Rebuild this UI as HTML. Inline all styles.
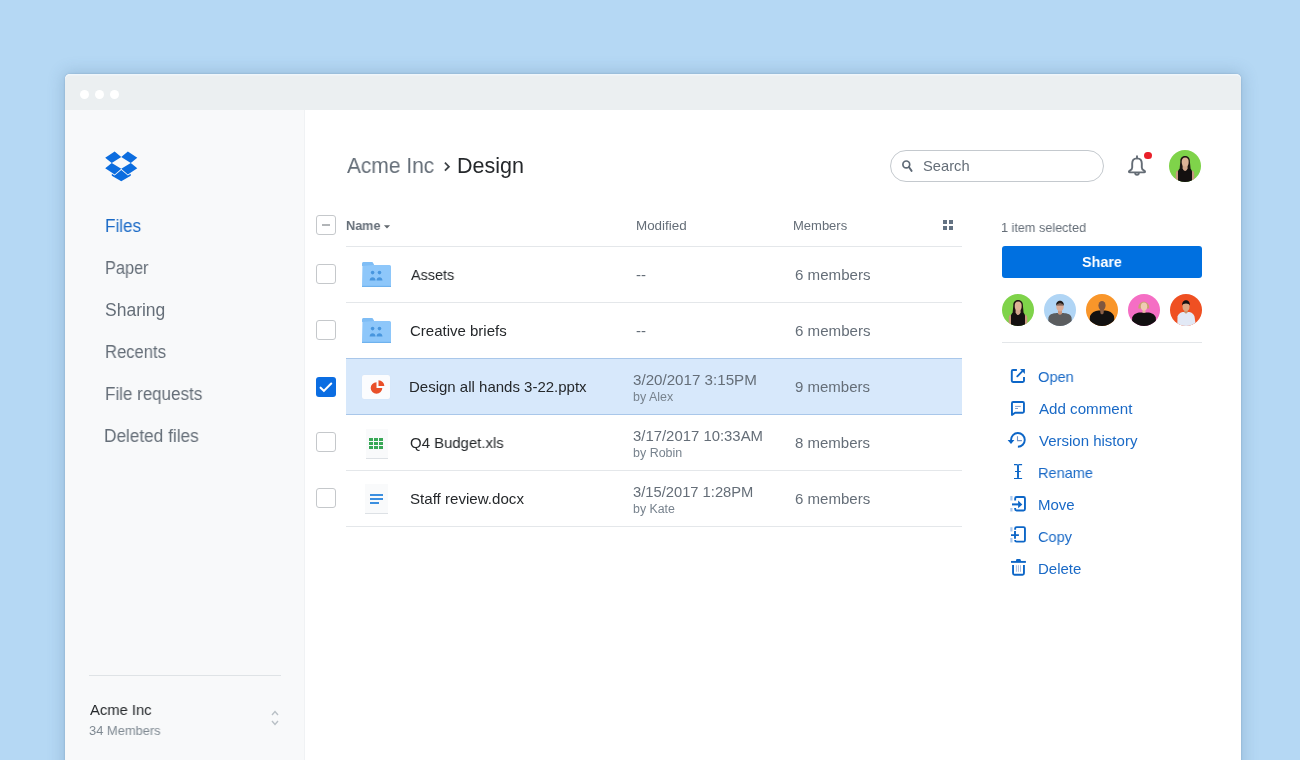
<!DOCTYPE html>
<html><head><meta charset="utf-8">
<style>
html,body{margin:0;padding:0;}
body{width:1300px;height:760px;overflow:hidden;background:#b5d8f4;position:relative;font-family:"Liberation Sans",sans-serif;}
.t{position:absolute;white-space:pre;will-change:transform;}
.abs{position:absolute;}
#win{position:absolute;left:65px;top:74px;width:1176px;height:720px;background:#fff;border-radius:5px 5px 0 0;box-shadow:0 0 1.5px rgba(40,70,100,0.35), 0 0 16px 2px rgba(50,90,130,0.22);overflow:hidden;}
#title{position:absolute;left:65px;top:74px;width:1176px;height:36px;background:#ebeff1;border-radius:5px 5px 0 0;box-shadow:inset 0 1.5px 0 rgba(240,246,252,0.9);}
.dot{position:absolute;width:9px;height:9px;border-radius:50%;background:#fff;top:89.5px;}
#side{position:absolute;left:65px;top:110px;width:239px;height:650px;background:#f8f9fa;border-right:1px solid #f0f2f4;}
.cb{position:absolute;left:316px;width:18px;height:18px;border:1px solid #c5c8cb;border-radius:3px;background:#fff;}
.hl{position:absolute;left:346px;width:616px;height:1px;background:#e4e7ea;}
.av{position:absolute;width:32px;height:32px;}
</style></head><body>
<div id="win"></div>
<div id="title"></div>
<div class="dot" style="left:80px"></div>
<div class="dot" style="left:95px"></div>
<div class="dot" style="left:110px"></div>
<div id="side"></div>
<svg class="abs" style="left:102.1px;top:147.2px" width="38.5" height="39" viewBox="0 0 24 24" preserveAspectRatio="none"><path fill="#0c6ddf" d="M12 6.134L6.069 9.797 2 6.54l5.883-3.843L12 6.134zm-10 6.92l5.883 3.843L12 13.459 6.069 9.797 2 13.054zm10 .405l4.116 3.439L22 13.054l-4.069-3.257L12 13.459zM22 6.54l-5.884-3.843L12 6.134l5.931 3.663L22 6.54zm-9.989 7.6l-4.129 3.43-1.767-1.154v1.295L12.011 21l5.887-3.289v-1.295l-1.767 1.154-4.12-3.43z"/></svg>
<div class="t" style="left:104.50px;top:217.95px;font-size:17.5px;line-height:17.5px;color:#1969c6;font-weight:400;transform:scaleX(0.9748);transform-origin:0 0;">Files</div>
<div class="t" style="left:104.56px;top:259.95px;font-size:17.5px;line-height:17.5px;color:#656e78;font-weight:400;transform:scaleX(0.9316);transform-origin:0 0;">Paper</div>
<div class="t" style="left:105.11px;top:301.95px;font-size:17.5px;line-height:17.5px;color:#656e78;font-weight:400;">Sharing</div>
<div class="t" style="left:104.54px;top:343.95px;font-size:17.5px;line-height:17.5px;color:#656e78;font-weight:400;transform:scaleX(0.9497);transform-origin:0 0;">Recents</div>
<div class="t" style="left:104.51px;top:385.95px;font-size:17.5px;line-height:17.5px;color:#656e78;font-weight:400;transform:scaleX(0.9712);transform-origin:0 0;">File requests</div>
<div class="t" style="left:104.49px;top:427.95px;font-size:17.5px;line-height:17.5px;color:#656e78;font-weight:400;transform:scaleX(0.9837);transform-origin:0 0;">Deleted files</div>
<div class="abs" style="left:89px;top:675px;width:192px;height:1px;background:#dfe3e6"></div>
<div class="t" style="left:89.77px;top:702.00px;font-size:15px;line-height:15px;color:#25282b;font-weight:400;transform:scaleX(0.9855);transform-origin:0 0;">Acme Inc</div>
<div class="t" style="left:89.31px;top:723.70px;font-size:13px;line-height:13px;color:#7f8992;font-weight:400;transform:scaleX(0.9903);transform-origin:0 0;">34 Members</div>
<svg class="abs" style="left:269px;top:707px" width="12" height="22" viewBox="0 0 12 22"><path d="M3 8 L6 4.5 L9 8 M3 14 L6 17.5 L9 14" fill="none" stroke="#b9c0c6" stroke-width="1.4"/></svg>
<div class="t" style="left:347.36px;top:156.25px;font-size:21.5px;line-height:21.5px;color:#656e78;font-weight:400;transform:scaleX(0.9729);transform-origin:0 0;">Acme Inc</div>
<svg class="abs" style="left:440px;top:158px" width="14" height="16" viewBox="440 158 14 16"><path d="M444.9 162.7 L448.9 166.7 L444.9 170.7" fill="none" stroke="#3e4347" stroke-width="1.8"/></svg>
<div class="t" style="left:456.75px;top:156.25px;font-size:21.5px;line-height:21.5px;color:#25282b;font-weight:400;transform:scaleX(0.9954);transform-origin:0 0;">Design</div>
<div class="abs" style="left:890px;top:150px;width:212px;height:30px;border:1px solid #c4c9ce;border-radius:16px;background:#fff"></div>
<svg class="abs" style="left:896px;top:154px" width="24" height="24" viewBox="896 154 24 24"><circle cx="906.3" cy="164.4" r="3.4" fill="none" stroke="#5f6a76" stroke-width="1.7"/><path d="M908.9 167 L911.6 170.9" stroke="#5f6a76" stroke-width="1.9" stroke-linecap="round"/></svg>
<div class="t" style="left:922.54px;top:158.75px;font-size:14.5px;line-height:14.5px;color:#656e78;font-weight:400;transform:scaleX(1.0145);transform-origin:0 0;">Search</div>
<svg class="abs" style="left:1120px;top:150px" width="32" height="32" viewBox="1120 150 32 32"><path d="M1137 156.3 V158.4" stroke="#646c75" stroke-width="1.9" stroke-linecap="round"/><path d="M1137 158.4 C1134 158.4 1132.2 160.6 1132.2 163.6 V167.4 C1132.2 168.9 1131.2 170 1129.8 170.7 C1128.4 171.4 1128.8 172.4 1130 172.4 H1144 C1145.2 172.4 1145.6 171.4 1144.2 170.7 C1142.8 170 1141.8 168.9 1141.8 167.4 V163.6 C1141.8 160.6 1140 158.4 1137 158.4 Z" fill="none" stroke="#646c75" stroke-width="1.9" stroke-linejoin="round"/><path d="M1135.1 172.8 C1135.1 175.4 1138.9 175.4 1138.9 172.8" fill="none" stroke="#646c75" stroke-width="1.8"/></svg>
<div class="abs" style="left:1144.2px;top:151.6px;width:7.6px;height:7.6px;border-radius:50%;background:#e9202a"></div>
<svg class="av" style="left:1169px;top:150px" viewBox="0 0 32 32"><defs><clipPath id="c1169_150"><circle cx="16" cy="16" r="16"/></clipPath></defs><g clip-path="url(#c1169_150)"><rect width="32" height="32" fill="#7fd34a"/><path d="M11.3 11.5 C10.8 4.2 21.4 4.2 20.9 11.5 L21.8 21 L10.4 21 Z" fill="#1e1512"/><path d="M6.6 34 L6.8 23.5 C7 21.2 8 20.8 9.2 20.8 L9.6 34 Z M22.4 34 L22.8 20.8 C24 20.8 25 21.2 25.2 23.5 L25.4 34 Z" fill="#c99880"/><path d="M9 34 L9 21.5 C9.3 19.5 10.5 18.8 12 18.6 L20 18.6 C21.5 18.8 22.7 19.5 23 21.5 L23 34 Z" fill="#141010"/><path d="M13.6 14.5 H18.6 V18.6 C18 20.2 17 21 16.1 21 C15.2 21 14.2 20.2 13.6 18.6 Z" fill="#d2a68c"/><ellipse cx="16.2" cy="11.9" rx="3.5" ry="4.5" fill="#ddb296"/></g></svg>
<div class="cb" style="top:215px"></div><div class="abs" style="left:322px;top:224px;width:8px;height:1.6px;background:#b2b5b8"></div>
<div class="t" style="left:345.96px;top:218.60px;font-size:13px;line-height:13px;color:#656e78;font-weight:700;transform:scaleX(0.9736);transform-origin:0 0;">Name</div>
<svg class="abs" style="left:383px;top:224px" width="8" height="6" viewBox="0 0 8 6"><path d="M0.9 1.2 L7.1 1.2 L4 4.6 Z" fill="#62686e"/></svg>
<div class="t" style="left:635.60px;top:218.60px;font-size:13px;line-height:13px;color:#656e78;font-weight:400;transform:scaleX(1.0309);transform-origin:0 0;">Modified</div>
<div class="t" style="left:792.64px;top:218.60px;font-size:13px;line-height:13px;color:#656e78;font-weight:400;transform:scaleX(0.9934);transform-origin:0 0;">Members</div>
<svg class="abs" style="left:943px;top:220px" width="10" height="10" viewBox="0 0 10 10"><rect x="0" y="0" width="4" height="4" fill="#637282"/><rect x="6" y="0" width="4" height="4" fill="#637282"/><rect x="0" y="6" width="4" height="4" fill="#637282"/><rect x="6" y="6" width="4" height="4" fill="#637282"/></svg>
<div class="abs" style="left:346px;top:358px;width:616px;height:57px;background:#d7e8fb;border-top:1px solid #a9c7ea;border-bottom:1px solid #a9c7ea;box-sizing:border-box"></div>
<div class="hl" style="top:246px"></div>
<div class="hl" style="top:302px"></div>
<div class="hl" style="top:470px"></div>
<div class="hl" style="top:526px"></div>
<div class="cb" style="top:264px"></div>
<svg class="abs" style="left:362px;top:262px" width="29" height="25" viewBox="0 0 29 25"><path d="M0.5 1.5 Q0.5 0 2 0 L9.5 0 Q10.5 0 11 1 L12 3 L27.5 3 Q29 3 29 4.5 L29 23.5 Q29 25 27.5 25 L1.5 25 Q0 25 0 23.5 Z" fill="#8ec7fa"/><path d="M0 4 L0 1.5 Q0 0 1.5 0 L9.5 0 Q10.5 0 11 1 L12 3 Z" fill="#7fbdf5"/><rect x="0" y="23.8" width="29" height="1.2" fill="#6fb2ee"/><circle cx="10.6" cy="10.6" r="1.8" fill="#4896de"/><circle cx="17.5" cy="10.6" r="1.8" fill="#4896de"/><path d="M7.6 18.6 C7.6 14 13.6 14 13.6 18.6 Z M14.5 18.6 C14.5 14 20.5 14 20.5 18.6 Z" fill="#4896de"/></svg>
<div class="t" style="left:410.67px;top:266.70px;font-size:15px;line-height:15px;color:#25282b;font-weight:400;transform:scaleX(0.9607);transform-origin:0 0;">Assets</div>
<div class="t" style="left:635.94px;top:266.50px;font-size:15px;line-height:15px;color:#656e78;font-weight:400;">--</div>
<div class="t" style="left:794.74px;top:266.60px;font-size:15px;line-height:15px;color:#656e78;font-weight:400;transform:scaleX(1.0076);transform-origin:0 0;">6 members</div>
<div class="cb" style="top:320px"></div>
<svg class="abs" style="left:362px;top:318px" width="29" height="25" viewBox="0 0 29 25"><path d="M0.5 1.5 Q0.5 0 2 0 L9.5 0 Q10.5 0 11 1 L12 3 L27.5 3 Q29 3 29 4.5 L29 23.5 Q29 25 27.5 25 L1.5 25 Q0 25 0 23.5 Z" fill="#8ec7fa"/><path d="M0 4 L0 1.5 Q0 0 1.5 0 L9.5 0 Q10.5 0 11 1 L12 3 Z" fill="#7fbdf5"/><rect x="0" y="23.8" width="29" height="1.2" fill="#6fb2ee"/><circle cx="10.6" cy="10.6" r="1.8" fill="#4896de"/><circle cx="17.5" cy="10.6" r="1.8" fill="#4896de"/><path d="M7.6 18.6 C7.6 14 13.6 14 13.6 18.6 Z M14.5 18.6 C14.5 14 20.5 14 20.5 18.6 Z" fill="#4896de"/></svg>
<div class="t" style="left:409.95px;top:322.70px;font-size:15px;line-height:15px;color:#25282b;font-weight:400;">Creative briefs</div>
<div class="t" style="left:635.94px;top:322.50px;font-size:15px;line-height:15px;color:#656e78;font-weight:400;">--</div>
<div class="t" style="left:794.74px;top:322.60px;font-size:15px;line-height:15px;color:#656e78;font-weight:400;transform:scaleX(1.0076);transform-origin:0 0;">6 members</div>
<div class="abs" style="left:316px;top:377px;width:20px;height:20px;border-radius:3px;background:#0b6de2"></div>
<svg class="abs" style="left:316px;top:377px" width="20" height="20" viewBox="0 0 20 20"><path d="M4.6 10.7 L7.9 13.9 L15.2 6.6" fill="none" stroke="#fff" stroke-width="2.1" stroke-linecap="round"/></svg>
<div class="abs" style="left:362px;top:375px;width:28px;height:24px;background:#fbfcfe;border-radius:2px;box-shadow:0 0 1px rgba(0,0,0,0.06)"></div>
<svg class="abs" style="left:362px;top:375px" width="28" height="24" viewBox="0 0 28 24"><path d="M14.5 13 L14.5 7.2 A5.8 5.8 0 1 0 20.3 13 Z" fill="#e9502a"/><path d="M16.5 11 L16.5 5.2 A5.8 5.8 0 0 1 22.3 11 Z" fill="#e9502a"/></svg>
<div class="t" style="left:409.47px;top:378.70px;font-size:15px;line-height:15px;color:#25282b;font-weight:400;">Design all hands 3-22.pptx</div>
<div class="t" style="left:632.82px;top:372.80px;font-size:14px;line-height:14px;color:#656e78;font-weight:400;transform:scaleX(1.0821);transform-origin:0 0;">3/20/2017 3:15PM</div>
<div class="t" style="left:632.60px;top:390.80px;font-size:12px;line-height:12px;color:#78838e;font-weight:400;transform:scaleX(1.0370);transform-origin:0 0;">by Alex</div>
<div class="t" style="left:794.81px;top:378.60px;font-size:15px;line-height:15px;color:#656e78;font-weight:400;">9 members</div>
<div class="cb" style="top:432px"></div>
<div class="abs" style="left:365.5px;top:428.5px;width:22.5px;height:30.5px;background:#f9fafb;border-bottom:1px solid #dde1e5;box-sizing:border-box"></div>
<svg class="abs" style="left:360px;top:422px" width="32" height="40" viewBox="360 422 32 40"><rect x="369" y="438" width="4" height="3" fill="#38a856"/><rect x="374" y="438" width="4" height="3" fill="#38a856"/><rect x="379" y="438" width="4" height="3" fill="#38a856"/><rect x="369" y="442" width="4" height="3" fill="#38a856"/><rect x="374" y="442" width="4" height="3" fill="#38a856"/><rect x="379" y="442" width="4" height="3" fill="#38a856"/><rect x="369" y="446" width="4" height="3" fill="#38a856"/><rect x="374" y="446" width="4" height="3" fill="#38a856"/><rect x="379" y="446" width="4" height="3" fill="#38a856"/></svg>
<div class="t" style="left:410.00px;top:434.70px;font-size:15px;line-height:15px;color:#25282b;font-weight:400;transform:scaleX(0.9939);transform-origin:0 0;">Q4 Budget.xls</div>
<div class="t" style="left:632.83px;top:428.80px;font-size:14px;line-height:14px;color:#656e78;font-weight:400;transform:scaleX(1.0637);transform-origin:0 0;">3/17/2017 10:33AM</div>
<div class="t" style="left:632.60px;top:446.80px;font-size:12px;line-height:12px;color:#78838e;font-weight:400;transform:scaleX(1.0387);transform-origin:0 0;">by Robin</div>
<div class="t" style="left:794.85px;top:434.60px;font-size:15px;line-height:15px;color:#656e78;font-weight:400;">8 members</div>
<div class="cb" style="top:488px"></div>
<div class="abs" style="left:365px;top:484px;width:23px;height:30px;background:#f9fafb;border-bottom:1px solid #dde1e5;box-sizing:border-box"></div>
<svg class="abs" style="left:365px;top:484px" width="23" height="30" viewBox="0 0 23 30"><rect x="5" y="10" width="13" height="2" fill="#3b8fe0"/><rect x="5" y="14" width="13" height="2" fill="#3b8fe0"/><rect x="5" y="18" width="9" height="2" fill="#3b8fe0"/></svg>
<div class="t" style="left:410.02px;top:490.70px;font-size:15px;line-height:15px;color:#25282b;font-weight:400;transform:scaleX(1.0072);transform-origin:0 0;">Staff review.docx</div>
<div class="t" style="left:632.84px;top:484.80px;font-size:14px;line-height:14px;color:#656e78;font-weight:400;transform:scaleX(1.0520);transform-origin:0 0;">3/15/2017 1:28PM</div>
<div class="t" style="left:632.61px;top:502.80px;font-size:12px;line-height:12px;color:#78838e;font-weight:400;transform:scaleX(1.0306);transform-origin:0 0;">by Kate</div>
<div class="t" style="left:794.75px;top:490.60px;font-size:15px;line-height:15px;color:#656e78;font-weight:400;transform:scaleX(1.0035);transform-origin:0 0;">6 members</div>
<div class="t" style="left:1001.44px;top:221.30px;font-size:13px;line-height:13px;color:#656e78;font-weight:400;transform:scaleX(0.9731);transform-origin:0 0;">1 item selected</div>
<div class="abs" style="left:1002px;top:246px;width:200px;height:32px;border-radius:3px;background:#0070e0"></div>
<div class="t" style="left:1081.90px;top:253.80px;font-size:15px;line-height:15px;color:#fff;font-weight:700;transform:scaleX(0.9569);transform-origin:0 0;">Share</div>
<svg class="av" style="left:1002px;top:294px" viewBox="0 0 32 32"><defs><clipPath id="c1002_294"><circle cx="16" cy="16" r="16"/></clipPath></defs><g clip-path="url(#c1002_294)"><rect width="32" height="32" fill="#7fd34a"/><path d="M11.3 11.5 C10.8 4.2 21.4 4.2 20.9 11.5 L21.8 21 L10.4 21 Z" fill="#1e1512"/><path d="M6.6 34 L6.8 23.5 C7 21.2 8 20.8 9.2 20.8 L9.6 34 Z M22.4 34 L22.8 20.8 C24 20.8 25 21.2 25.2 23.5 L25.4 34 Z" fill="#c99880"/><path d="M9 34 L9 21.5 C9.3 19.5 10.5 18.8 12 18.6 L20 18.6 C21.5 18.8 22.7 19.5 23 21.5 L23 34 Z" fill="#141010"/><path d="M13.6 14.5 H18.6 V18.6 C18 20.2 17 21 16.1 21 C15.2 21 14.2 20.2 13.6 18.6 Z" fill="#d2a68c"/><ellipse cx="16.2" cy="11.9" rx="3.5" ry="4.5" fill="#ddb296"/></g></svg>
<svg class="av" style="left:1044px;top:294px" viewBox="0 0 32 32"><defs><clipPath id="c1044_294"><circle cx="16" cy="16" r="16"/></clipPath></defs><g clip-path="url(#c1044_294)"><rect width="32" height="32" fill="#b0d5f5"/><path d="M3.5 34 L4.5 23.5 C5.5 20 9 19.3 12.5 19 L19.5 19 C23 19.3 26.5 20 27.5 23.5 L28.5 34 Z" fill="#5b5d5f"/><path d="M14 16 H18 V19.8 Q16 21.5 14 19.8 Z" fill="#c9967e"/><ellipse cx="16" cy="12.8" rx="3.7" ry="4.6" fill="#dcae98"/><path d="M12.1 11.5 C11.6 5 20.4 5 19.9 11.5 C19.5 8.8 12.5 8.8 12.1 11.5 Z" fill="#231c19"/><path d="M12.3 10.9 H19.7" stroke="#3a2c28" stroke-width="0.9"/></g></svg>
<svg class="av" style="left:1086px;top:294px" viewBox="0 0 32 32"><defs><clipPath id="c1086_294"><circle cx="16" cy="16" r="16"/></clipPath></defs><g clip-path="url(#c1086_294)"><rect width="32" height="32" fill="#f9962a"/><path d="M3 34 L4 22 C5.5 18.5 9 17 12.5 16.6 L19.5 16.6 C23 17 26.5 18.5 28 22 L29 34 Z" fill="#121111"/><path d="M14 15 H18 L17.5 19.5 L16 20.5 L14.5 19.5 Z" fill="#8a6048"/><ellipse cx="16" cy="11.6" rx="3.6" ry="4.7" fill="#80573f"/></g></svg>
<svg class="av" style="left:1128px;top:294px" viewBox="0 0 32 32"><defs><clipPath id="c1128_294"><circle cx="16" cy="16" r="16"/></clipPath></defs><g clip-path="url(#c1128_294)"><rect width="32" height="32" fill="#f56ec4"/><path d="M10.4 14.5 C9.5 5.5 22 5.5 21.2 14.5 Z" fill="#c8a06e"/><path d="M3.5 34 L4.2 23.5 C5.5 20 9 18.8 12.5 18.6 L19.5 18.6 C23 18.8 26.5 20 27.8 23.5 L28.5 34 Z" fill="#121011"/><rect x="14.5" y="15" width="3" height="3.8" fill="#e7bca2"/><ellipse cx="16" cy="12.6" rx="3.2" ry="4" fill="#efcbb3"/></g></svg>
<svg class="av" style="left:1170px;top:294px" viewBox="0 0 32 32"><defs><clipPath id="c1170_294"><circle cx="16" cy="16" r="16"/></clipPath></defs><g clip-path="url(#c1170_294)"><rect width="32" height="32" fill="#ef5022"/><path d="M7.3 34 L7.5 22.5 C8.5 19 11.5 18 13.5 17.9 L18.5 17.9 C20.5 18 23.5 19 24.5 22.5 L26.2 34 Z" fill="#e2e9f6"/><path d="M14.3 15.5 H17.7 V18.5 L16 19.8 L14.3 18.5 Z" fill="#c9966f"/><ellipse cx="16" cy="12.4" rx="3.5" ry="4.5" fill="#dcaa85"/><path d="M12.2 11.5 C11.5 4.6 20.5 4.6 19.8 11.5 C19.3 8.8 12.7 8.8 12.2 11.5 Z" fill="#151212"/></g></svg>
<div class="abs" style="left:1002px;top:342px;width:200px;height:1px;background:#e3e6e9"></div>
<div class="t" style="left:1038.11px;top:368.80px;font-size:15px;line-height:15px;color:#1969c6;font-weight:400;transform:scaleX(0.9764);transform-origin:0 0;">Open</div>
<div class="t" style="left:1038.77px;top:400.80px;font-size:15px;line-height:15px;color:#1969c6;font-weight:400;transform:scaleX(1.0085);transform-origin:0 0;">Add comment</div>
<div class="t" style="left:1038.74px;top:432.80px;font-size:15px;line-height:15px;color:#1969c6;font-weight:400;">Version history</div>
<div class="t" style="left:1037.61px;top:464.80px;font-size:15px;line-height:15px;color:#1969c6;font-weight:400;transform:scaleX(0.9706);transform-origin:0 0;">Rename</div>
<div class="t" style="left:1037.57px;top:496.80px;font-size:15px;line-height:15px;color:#1969c6;font-weight:400;">Move</div>
<div class="t" style="left:1038.07px;top:528.80px;font-size:15px;line-height:15px;color:#1969c6;font-weight:400;transform:scaleX(0.9699);transform-origin:0 0;">Copy</div>
<div class="t" style="left:1037.57px;top:560.80px;font-size:15px;line-height:15px;color:#1969c6;font-weight:400;">Delete</div>
<svg class="abs" style="left:1000px;top:360px" width="32" height="224" viewBox="1000 360 32 224">
<path d="M1016.9 370 H1013 Q1011.8 370 1011.8 371.2 V380.8 Q1011.8 382 1013 382 H1022.8 Q1024 382 1024 380.8 V377" fill="none" stroke="#0d66c7" stroke-width="1.9"/>
<path d="M1017.3 376.3 L1022 371.6" stroke="#0d66c7" stroke-width="1.9" stroke-linecap="round"/>
<path d="M1020.0 369 H1024.9 V373.9 Z" fill="#0d66c7"/>

<path d="M1011.95 415 V403.2 Q1011.95 402 1013.15 402 H1022.75 Q1023.95 402 1023.95 403.2 V411.55 Q1023.95 412.75 1022.75 412.75 H1015.1 Z" fill="none" stroke="#0d66c7" stroke-width="1.9" stroke-linejoin="round"/>
<path d="M1015.1 406.4 H1020.8 M1015.1 408.5 H1018" stroke="#6f93c9" stroke-width="0.9"/>

<path d="M1011.05 440 A6.85 6.85 0 1 1 1017.9 446.75" fill="none" stroke="#0d66c7" stroke-width="1.9"/>
<path d="M1007.6 440 H1014.4 L1011 443.9 Z" fill="#0d66c7"/>
<path d="M1017.5 436.2 V440.6 H1021.9" fill="none" stroke="#6f93c9" stroke-width="1.1"/>

<path d="M1014 464.6 H1016.6 Q1018 464.6 1018 466.2 V476.9 Q1018 478.5 1016.6 478.5 H1014 M1022.1 464.6 H1019.4 Q1018 464.6 1018 466.2 M1018 476.9 Q1018 478.5 1019.4 478.5 H1022.1 M1015 471.5 H1020.8" fill="none" stroke="#0d66c7" stroke-width="1.2"/>
<path d="M1018 465.5 V477.6" stroke="#0d66c7" stroke-width="1.8"/>

<path d="M1015.15 500.5 V498.5 Q1015.15 497.05 1016.6 497.05 H1023.5 Q1024.95 497.05 1024.95 498.5 V509 Q1024.95 510.45 1023.5 510.45 H1016.6 Q1015.15 510.45 1015.15 509 V508.1" fill="none" stroke="#0d66c7" stroke-width="1.9"/>
<path d="M1011.4 496.1 V500.5 M1011.4 508.1 V511.4" stroke="#a9c8ee" stroke-width="2.2"/>
<path d="M1012 504.4 H1018.6" stroke="#0d66c7" stroke-width="2"/>
<path d="M1018.1 500.5 L1022.3 504.4 L1018.1 508.3 Z" fill="#0d66c7"/>

<path d="M1015.15 529.7 V528.6 Q1015.15 527.15 1016.6 527.15 H1023.5 Q1024.95 527.15 1024.95 528.6 V540.2 Q1024.95 541.65 1023.5 541.65 H1016.6 Q1015.15 541.65 1015.15 540.2 V540.1" fill="none" stroke="#0d66c7" stroke-width="1.9"/>
<path d="M1011.4 527.2 V531.6 M1011.4 538 V542.6" stroke="#a9c8ee" stroke-width="2.2"/>
<path d="M1011 535.1 H1018.9 M1015 531.1 V538.7" stroke="#0d66c7" stroke-width="1.9"/>

<path d="M1011 561.9 H1025.9" stroke="#0d66c7" stroke-width="1.9"/>
<path d="M1016 561.5 V560.2 Q1016 559 1017.2 559 H1019.6 Q1020.8 559 1020.8 560.2 V561.5 Z" fill="#0d66c7"/>
<path d="M1013.05 565 V573.3 Q1013.05 574.8 1014.5 574.8 H1022.5 Q1023.95 574.8 1023.95 573.3 V565" fill="none" stroke="#0d66c7" stroke-width="1.9"/>
<path d="M1016.4 565.2 V571.8 M1018.4 565.2 V571.8 M1020.5 565.2 V571.8" stroke="#9fb3d8" stroke-width="0.9"/>
</svg>
</body></html>
